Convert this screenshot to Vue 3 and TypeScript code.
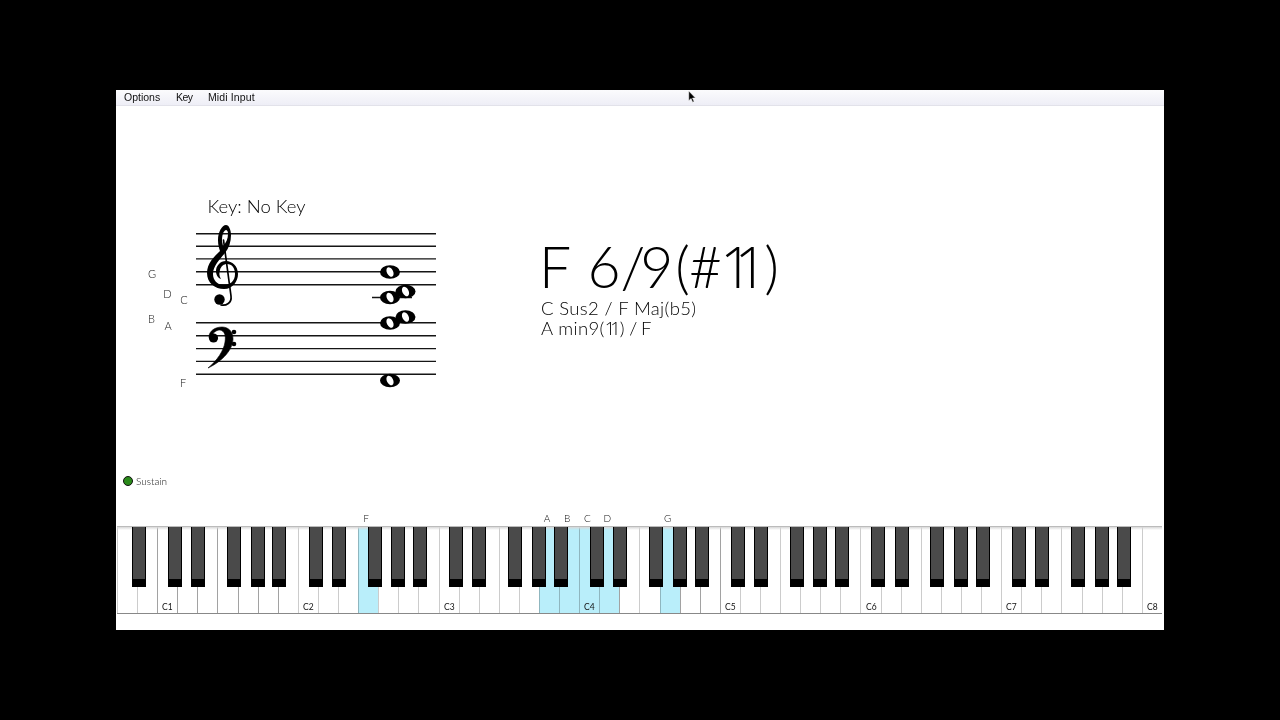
<script setup lang="ts">
const whiteWidth = 20.1
const names = ['A', 'B', 'C', 'D', 'E', 'F', 'G']
const active: Record<number, string> = { 12: 'F', 21: 'A', 22: 'B', 23: 'C', 24: 'D', 27: 'G' }
const strong = new Set([2, 3, 4, 5, 6, 7, 8, 21, 22, 23, 24, 25, 27, 28, 29, 30])

const whites = Array.from({ length: 52 }, (_, i) => {
  const name = names[i % 7]
  const octave = Math.floor((i + 5) / 7)
  return {
    i,
    tag: name === 'C' ? `C${octave}` : '',
    active: i in active,
    note: active[i] ?? '',
    strong: strong.has(i),
  }
})

const offset: Record<string, number> = { A: 1.6, C: -2.4, D: 0.6, F: -3.8, G: -0.2 }
const blacks = whites
  .filter((w) => w.i < 51 && names[w.i % 7] in offset)
  .map((w) => (w.i + 1) * whiteWidth + offset[names[w.i % 7]] - 7)

const trebleLines = [233.7, 246.2, 258.9, 271.8, 284.8]
const bassLines = [322.8, 335.8, 348.6, 361.4, 374.3]
const notes = [
  [390, 272],
  [390, 297.5],
  [405.5, 291.5],
  [390, 323],
  [405.5, 317],
  [390, 380.5],
]
const noteLabels = [
  ['G', 152, 278],
  ['D', 167.5, 297.5],
  ['C', 184, 303.5],
  ['B', 151.5, 323],
  ['A', 168, 329.5],
  ['F', 183, 386.5],
]
</script>

<template>
  <div class="screen">
    <div class="window">
      <nav class="menu">
        <span>Options</span>
        <span class="tight">Key</span>
        <span class="midi">Midi Input</span>
      </nav>

      <svg class="cursor" width="9" height="14" viewBox="0 0 12 18">
        <path d="M1 1v13l3-3 2.200 5 2-1-2.200-4.600h4z" fill="#000" stroke="#fff" stroke-width="0.700" />
      </svg>

      <main class="score">
        <svg class="staff" width="340" height="240" viewBox="116 195 340 240">
          <text class="keyname" x="207.500" y="212.500">Key: No Key</text>
          <g stroke="#151515" stroke-width="1.400">
            <line v-for="y in trebleLines" :key="y" x1="196" x2="436" :y1="y" :y2="y" />
            <line v-for="y in bassLines" :key="y" x1="196" x2="436" :y1="y" :y2="y" />
            <line x1="372" x2="412" y1="297.500" y2="297.500" />
          </g>

          <!-- treble clef -->
          <path
            fill-rule="evenodd"
            fill="#000"
            d="M226 225C222 225 218 232 218 240C218 245 219 248 220 251C214 257 207 263 207 273C207 283 215 289 224 289C233 289 238 281 238 274C238 266 232 261 226 261C220 261 216 266 216 271C216 275 218 278 221 279C219 276 219 273 220 270C221 266 224 264 227 264C232 264 235 268 235 274C235 281 230 285 224 285C217 285 213 280 213 274C213 266 220 259 225 253C229 248 231 242 231 235C231 230 229 225 226 225ZM226 230C223 231 222 236 222 241L223 246C226 243 228 239 228 234C228 231 227 230 226 230Z"
          />
          <path d="M223.500 240L231 296C232 303 226 306 221 305" fill="none" stroke="#000" stroke-width="1.700" stroke-linecap="round" />
          <circle cx="219.500" cy="299.500" r="5.200" fill="#000" />

          <!-- bass clef -->
          <path d="M208 368C223 361 233 349 233 339C233 331 228 327 222 327C215 327 209 331 209 337C209 338 210 339 211 339C212 332 217 330 220 330C225 331 226 336 225 342C224 350 217 361 208 368Z" fill="#000" stroke="#000" stroke-width="0.600" />
          <circle cx="213.500" cy="338" r="4.600" fill="#000" />
          <circle cx="234" cy="332" r="2.300" fill="#000" />
          <circle cx="234" cy="344" r="2.300" fill="#000" />

          <!-- whole notes -->
          <g v-for="n in notes" :key="`${n[0]}-${n[1]}`">
            <ellipse :cx="n[0]" :cy="n[1]" rx="10" ry="6.800" fill="#000" />
            <ellipse :cx="n[0]" :cy="n[1]" rx="3.100" ry="5" fill="#fff" :transform="`rotate(-28 ${n[0]} ${n[1]})`" />
          </g>

          <text v-for="l in noteLabels" :key="String(l[0])" class="label" :x="l[1]" :y="l[2]" text-anchor="middle">{{ l[0] }}</text>
        </svg>

        <section class="chords">
          <h1>F&nbsp;<span class="w6">6</span><span class="slash">/</span>9<span class="paren">(</span><span class="hash">#</span><span class="ones">11</span>)</h1>
          <p>C Sus2 / F Maj(b5)</p>
          <p>A min9<span class="smallones">(<b>11</b>)</span><span class="tail"> / F</span></p>
        </section>
      </main>

      <div class="sustain"><i></i><span>Sustain</span></div>

      <div class="names">
        <span
          v-for="w in whites.filter((k) => k.note)"
          :key="w.i"
          class="name"
          :style="{ left: `${w.i * whiteWidth + 8}px` }"
        >{{ w.note }}</span>
      </div>

      <div class="keyboard">
        <div
          v-for="w in whites"
          :key="w.i"
          class="white"
          :class="{ on: w.active, strong: w.strong }"
        >
          <span v-if="w.tag">{{ w.tag }}</span>
        </div>
        <div v-for="x in blacks" :key="x" class="black" :style="{ left: `${x}px` }"></div>
      </div>
    </div>
  </div>
</template>

<style>
html,
body {
  margin: 0;
  background: #000;
}
</style>

<style scoped>
.screen {
  width: 1280px;
  height: 720px;
  background: #000;
  padding-top: 90px;
  box-sizing: border-box;
}
.window {
  position: relative;
  width: 1048px;
  height: 540px;
  margin-left: 116px;
  background: #fff;
  display: flex;
  flex-direction: column;
  overflow: hidden;
  font-family: Lato, "Liberation Sans", sans-serif;
}
.menu {
  height: 14px;
  display: flex;
  gap: 16px;
  padding: 0 0 1px 8px;
  align-items: center;
  background: linear-gradient(#fbfbfd, #eeeef6);
  border-bottom: 1px solid #e2e2ea;
  font: 10.500px "Liberation Sans", sans-serif;
  color: #111;
}
.menu span {
  will-change: transform;
}
.menu .tight {
  letter-spacing: -0.600px;
}
.menu .midi {
  letter-spacing: 0.120px;
}
.cursor {
  position: absolute;
  left: 571.500px;
  top: 0;
}
.score {
  height: 355px;
  display: flex;
}
.staff {
  display: block;
  margin-top: 89px;
  flex: none;
  will-change: transform;
}
.keyname {
  font-size: 18.500px;
  font-weight: 300;
  fill: #000;
}
.label {
  font-size: 11px;
  font-weight: 300;
  fill: #111;
}
.chords {
  margin-left: 85px;
  margin-top: 129px;
  color: #000;
  will-change: transform;
}
.chords h1 {
  margin: 0 0 2px -2px;
  font-size: 57px;
  line-height: 62px;
  font-weight: 300;
  white-space: nowrap;
}
.w6 {
  margin-left: 2px;
}
.slash {
  letter-spacing: -5px;
}
.paren {
  margin-left: 2px;
  letter-spacing: -1px;
}
.hash {
  letter-spacing: -2px;
}
.ones {
  font-family: "Open Sans", Lato, sans-serif;
  letter-spacing: -18px;
  margin-right: 15px;
}
.chords p {
  margin: 0;
  font-size: 18.500px;
  line-height: 19px;
  font-weight: 300;
  letter-spacing: 0.350px;
}
.smallones b {
  font-family: "Open Sans", Lato, sans-serif;
  font-weight: 300;
  letter-spacing: -5px;
  margin-right: 4px;
}
.tail {
  letter-spacing: -0.300px;
  word-spacing: -0.500px;
}
.sustain {
  display: flex;
  align-items: center;
  gap: 3px;
  height: 14px;
  padding-left: 7px;
  margin-top: 13px;
  font-size: 10px;
  font-weight: 300;
  color: #111;
}
.sustain span {
  will-change: transform;
}
.sustain i {
  width: 8px;
  height: 8px;
  border-radius: 50%;
  background: #2a8a1a;
  border: 1px solid #111;
}
.names {
  position: relative;
  height: 20px;
  margin-top: 18px;
  will-change: transform;
}
.name {
  position: absolute;
  top: 6px;
  width: 20px;
  margin-left: -9px;
  text-align: center;
  font-size: 10px;
  font-weight: 300;
  line-height: 12px;
  color: #111;
}
.keyboard {
  position: relative;
  margin-left: 1px;
  width: 1045px;
  height: 86px;
  display: flex;
  border-top: 1px solid #bbb;
  border-bottom: 1px solid #888;
}
.keyboard::before {
  content: "";
  position: absolute;
  z-index: 1;
  left: 0;
  right: 0;
  top: 0;
  height: 3px;
  background: linear-gradient(#d8d8d8, rgba(255, 255, 255, 0));
}
.white {
  position: relative;
  box-sizing: border-box;
  flex: 0 0 20.100px;
  border-left: 1px solid #ccc;
  display: flex;
  justify-content: center;
  align-items: flex-end;
  font-size: 8.500px;
  line-height: 11px;
  color: #111;
  font-family: Lato, "Liberation Sans", sans-serif;
}
.white.strong {
  border-left-color: #a2a2a2;
}
.white:last-of-type {
  border-right: 1px solid #ccc;
}
.white.on {
  background: #b9eefa;
  border-left-color: #8fb6bf;
}
.white span {
  will-change: transform;
}
.black {
  position: absolute;
  z-index: 2;
  top: 0;
  width: 14px;
  height: 60px;
  box-sizing: border-box;
  background: #4a4a4a;
  border: 1px solid #000;
  border-top: 0;
  border-bottom: 8px solid #000;
}
</style>
